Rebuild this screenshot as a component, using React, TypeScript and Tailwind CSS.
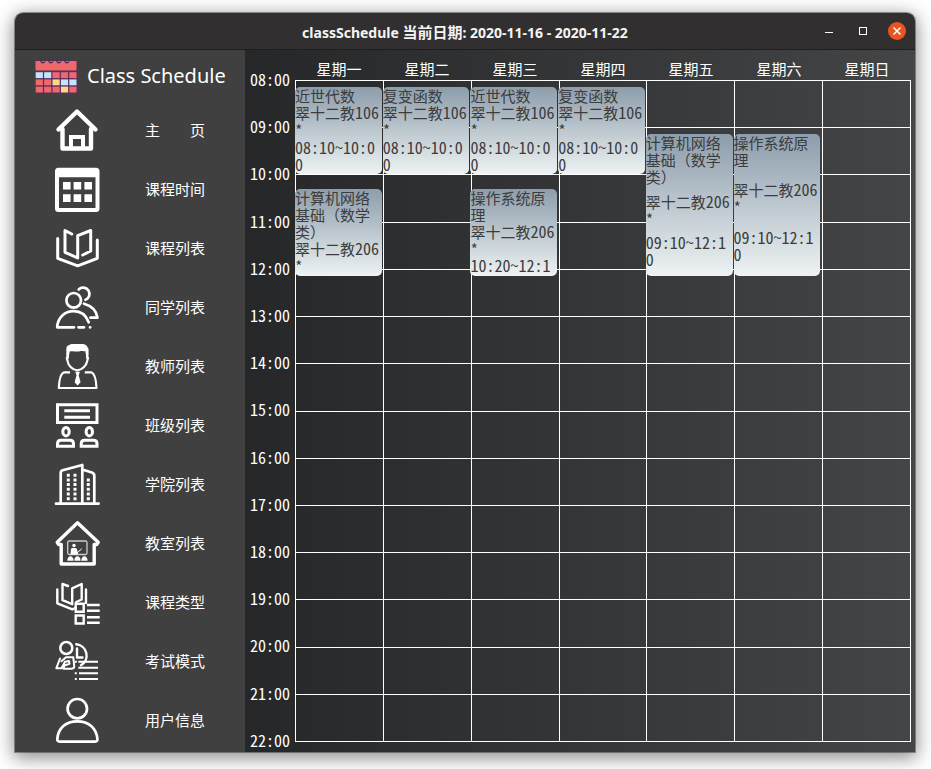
import type { ReactNode } from "react";

const FIRST_HOUR = 8;
const LAST_HOUR = 22;
const DAYS = ["星期一", "星期二", "星期三", "星期四", "星期五", "星期六", "星期日"];
const ROWS = LAST_HOUR - FIRST_HOUR;

type Course = { day: number; name: string; hall: string; room: string; from: string; to: string };

const COURSES: Course[] = [
  { day: 0, name: "近世代数", hall: "翠十二教", room: "106", from: "08:10", to: "10:00" },
  { day: 0, name: "计算机网络基础（数学类）", hall: "翠十二教", room: "206", from: "10:20", to: "12:10" },
  { day: 1, name: "复变函数", hall: "翠十二教", room: "106", from: "08:10", to: "10:00" },
  { day: 2, name: "近世代数", hall: "翠十二教", room: "106", from: "08:10", to: "10:00" },
  { day: 2, name: "操作系统原理", hall: "翠十二教", room: "206", from: "10:20", to: "12:10" },
  { day: 3, name: "复变函数", hall: "翠十二教", room: "106", from: "08:10", to: "10:00" },
  { day: 4, name: "计算机网络基础（数学类）", hall: "翠十二教", room: "206", from: "09:10", to: "12:10" },
  { day: 5, name: "操作系统原理", hall: "翠十二教", room: "206", from: "09:10", to: "12:10" },
];

function Icon({ children }: { children: ReactNode }) {
  return (
    <svg
      viewBox="0 0 44 44"
      className="size-11 shrink-0 overflow-visible"
      fill="none"
      stroke="#fff"
      strokeWidth="2.7"
      strokeLinecap="round"
      strokeLinejoin="round"
      aria-hidden="true"
    >
      {children}
    </svg>
  );
}

const MENU: { label: string; icon: ReactNode }[] = [
  {
    label: "主\u3000\u3000页",
    icon: (
      <Icon>
        <path strokeWidth="4.4" d="M7.500 20v19.500h28.500V20M3.500 20.500 22 2.500l18.500 18" />
        <path strokeWidth="4" strokeLinejoin="miter" d="M16 39V28h12v11" />
      </Icon>
    ),
  },
  {
    label: "课程时间",
    icon: (
      <Icon>
        <path
          fill="#fff"
          stroke="none"
          fillRule="evenodd"
          d="M3.500-.3h37.500a3.500 3.500 0 0 1 3.500 3.500V40.500a3.500 3.500 0 0 1-3.500 3.500H3.500A3.500 3.500 0 0 1 0 40.500V3.200A3.500 3.500 0 0 1 3.500-.3ZM4 9.300v30.700h36.500V9.300ZM8 14h7.600v7.600H8Zm10.600 0h7.600v7.600h-7.600Zm10.800 0h7.600v7.600h-7.600ZM8 26.300h7.600v7.600H8Zm10.600 0h7.600v7.600h-7.600Zm10.800 0h7.600v7.600h-7.600Z"
        />
      </Icon>
    ),
  },
  {
    label: "课程列表",
    icon: (
      <Icon>
        <path strokeWidth="3" d="M2.700 11.500v19.800l20 7.500 19.600-7.500V13M16.700 7 10 3.500v21.800l12.700 5.700V8.700l13-5.200V24l-8 4" />
      </Icon>
    ),
  },
  {
    label: "同学列表",
    icon: (
      <Icon>
        <circle cx="18.700" cy="14.300" r="7.300" />
        <path d="M23.700 3.500A6.300 6.300 0 1 1 30.500 13.800M29 17.700c7 2 12.500 6 13.500 14H35.500M33.700 36.300C31 29 26 25.200 18.700 25.200 9.500 25.200 2.500 32 2.200 41.300H19M23.500 41.300h5.500M35 41.300h.2" />
      </Icon>
    ),
  },
  {
    label: "教师列表",
    icon: (
      <Icon>
        <path
          fill="#fff"
          stroke="none"
          d="M11.500 13.500 11.300 4.500C11.300 1.500 12.500.500 14 .300 15-.8 16-1 18-1h9.500C30-1 32 .3 32.500 2.200 33.500 3 33.700 4 33.600 6l-.4 8.500-1.700-1L30.300 6c-2 .8-3.300-.3-5.300.3-3 1-6.500-.8-10.300.2l-1.200 7Z"
        />
        <path strokeWidth="2.200" d="M12.800 8v4.500l-1 .5.800 3c.5 4.500 5 9.300 9.700 9.300s9.200-4.800 9.900-9.300l.8-3-.9-.5V8" />
        <path strokeWidth="2.200" strokeLinecap="butt" d="M15 27.300H9c-3 1-4.800 7-5.200 15.700h37.700c-.4-8.700-2.200-14.700-5.200-15.700h-6.500" />
        <path fill="#fff" stroke="none" d="M20.300 26.700h4.600l-1.200 3.600 1.900 7-3 3.200-3-3.200 1.900-7Z" />
      </Icon>
    ),
  },
  {
    label: "班级列表",
    icon: (
      <Icon>
        <g strokeWidth="3" strokeLinejoin="miter" strokeLinecap="butt">
          <path d="M2.500.800h39.500v17.700H2.500Z" />
          <path d="M9.300 6.700H35M9.300 13.200H35" />
          <ellipse cx="11" cy="27.700" rx="3.200" ry="4.200" />
          <ellipse cx="34.300" cy="27.700" rx="3.200" ry="4.200" />
          <path d="M2.500 42.300v-2.500c0-2.500 1-3.500 3.500-3.500h9c2.500 0 3.500 1 3.500 3.500v2.500ZM26.200 42.300v-2.500c0-2.500 1-3.500 3.500-3.500h8.800c2.500 0 3.500 1 3.500 3.500v2.500Z" />
        </g>
      </Icon>
    ),
  },
  {
    label: "学院列表",
    icon: (
      <Icon>
        <path d="M1 40.700h42.600M5.700 40V10c0-1.500.8-2.300 2-2.700L27.300 2v38M27.300 6.500l9.500 3c1.700.600 2.500 1.500 2.500 3V40" />
        <path strokeWidth="3" strokeLinecap="butt" strokeDasharray="3 1.700" d="M13.300 10.700v27M20 10.700v27M33.300 15.400v22.300" />
      </Icon>
    ),
  },
  {
    label: "教室列表",
    icon: (
      <Icon>
        <path strokeWidth="3.400" d="M22.500.800 2.200 20.200l1.500 2.300h2.500V42h33V22.500h2.500l1.500-2.300Z" />
        <rect x="12.700" y="19" width="19.300" height="13.500" rx="1.500" strokeWidth="1.300" stroke="#ccc" />
        <path strokeWidth="1" d="m22 31 4.500-4" />
        <circle cx="19" cy="23.500" r="1.700" fill="#fff" stroke="none" />
        <path
          fill="#fff"
          stroke="none"
          d="M16 27c0-1.200 5.500-1.200 6 0l1 5.500h-7.500ZM12.300 38.700c0-6 6.300-6 6.300 0ZM19.300 38.700c0-6 6.300-6 6.300 0ZM26.300 38.700c0-6 6.300-6 6.300 0Z"
        />
      </Icon>
    ),
  },
  {
    label: "课程类型",
    icon: (
      <Icon>
        <path strokeWidth="2.400" d="M2.300 8.500v13.800l15 6 3-1.300M31 8.500V22M13 5 7.500 3v16.200l9.700 4V7.300L26.700 3v15.500l-5.500 2.500" />
        <path strokeWidth="2.400" strokeLinejoin="miter" strokeLinecap="butt" d="M20.700 22.700h8v8h-8ZM20.700 34.500h8v8h-8ZM32 24h12.700M32 29.700h12.700M32 36.300h12.700M32 41.800h12.700" />
      </Icon>
    ),
  },
  {
    label: "考试模式",
    icon: (
      <Icon>
        <circle cx="11.300" cy="8" r="6" strokeWidth="2.500" />
        <path strokeWidth="2.400" d="M21.300 4.300A11.300 11.300 0 0 1 26 25.300M22 8.500v9h5.500" />
        <path strokeWidth="2" d="M5 18.500 1.300 28.300h5.200l1-2M11 17.300h7.300l1 9.500c-.3 1.500-1.300 1.900-3 1.900H8.500l.8-3.200 5.200-1.700-.5-2.800-4 .8-2 3.700M11 17.300l-4.500 4" />
        <path strokeWidth="2" strokeLinecap="butt" d="M23.300 21.700h19.700M23.300 27.700h19.700M24 33.300h19M24 38.900h19M19.800 33.300h2M19.800 38.900h2M19.800 21.700h2" />
      </Icon>
    ),
  },
  {
    label: "用户信息",
    icon: (
      <Icon>
        <circle cx="22.300" cy="9.700" r="9.700" />
        <path d="M4.500 42.600h35.700c1.500 0 2.400-1 2.200-2.500C41.500 29 33.500 22.300 22.300 22.300S3 29 2.300 40.100c-.1 1.500.7 2.500 2.200 2.500Z" />
      </Icon>
    ),
  },
];

function Logo() {
  const red = "#ee696c";
  const blue = "#bfe6fb";
  const yellow = "#f9d98a";
  const cells = [
    [blue, blue, red, red, red],
    [red, red, yellow, blue, blue],
    [red, red, red, yellow, red],
  ];
  return (
    <svg viewBox="0 0 42 36" className="h-9 w-[42px] shrink-0" aria-hidden="true">
      <rect x="0" y="2.500" width="42" height="32.500" rx="1" fill="#5c2a5c" />
      <rect x=".5" y="3" width="41" height="9.500" rx=".5" fill={red} />
      {cells.map((row, r) =>
        row.map((fill, c) => (
          <rect key={`${r}-${c}`} x={0.7 + c * 8.4} y={14.2 + r * 7.2} width="7.200" height="5.900" fill={fill} />
        )),
      )}
      {[8.5, 16.5, 24.5, 32.5].map((x) => (
        <path key={x} d={`M${x - 1.5} 1a2 2 0 1 0 2.800 2.500`} fill="none" stroke="#4b2a5c" strokeWidth="1.300" />
      ))}
    </svg>
  );
}

function TitleBar() {
  return (
    <header className="grid h-[37px] shrink-0 grid-cols-[100px_1fr_100px] items-center rounded-t-lg border-b border-[#1f1e1f] bg-[#322f30] pt-[3px]">
      <h1 className="col-start-2 text-center font-['Noto_Sans','Noto_Sans_CJK_SC',sans-serif] text-sm font-bold whitespace-nowrap text-[#f4f4f2]">
        classSchedule <span className="text-[15px] leading-5">当前日期</span>: 2020-11-16 - 2020-11-22
      </h1>
      <div className="flex items-center justify-end gap-4 pr-[9px] pb-1">
        <button aria-label="最小化" className="flex size-[18px] items-center justify-center pt-1">
          <span className="h-px w-2 bg-white" />
        </button>
        <button aria-label="最大化" className="flex size-[18px] items-center justify-center">
          <span className="size-2 border border-white" />
        </button>
        <button aria-label="关闭" className="flex size-[18px] items-center justify-center rounded-full bg-[#e95420]">
          <svg viewBox="0 0 10 10" className="size-[10px]" stroke="#fff" strokeWidth="1.500" aria-hidden="true">
            <path d="m1.500 1.500 7 7m0-7-7 7" />
          </svg>
        </button>
      </div>
    </header>
  );
}

function Sidebar() {
  return (
    <aside className="flex w-[230px] shrink-0 flex-col bg-[#404040] pb-0.5 text-white">
      <div className="flex h-[51px] shrink-0 items-center gap-[10px] pl-5">
        <Logo />
        <span className="font-['Noto_Sans',sans-serif] text-xl whitespace-nowrap">Class Schedule</span>
      </div>
      <nav className="flex flex-1 flex-col">
        {MENU.map((item) => (
          <button key={item.label} className="flex flex-1 items-center gap-[46px] pl-10 text-[15px]">
            {item.icon}
            <span>{item.label}</span>
          </button>
        ))}
      </nav>
    </aside>
  );
}

function hoursSinceStart(time: string) {
  const [h, m] = time.split(":").map(Number);
  return h + m / 60 - FIRST_HOUR;
}

function CourseCard({ course }: { course: Course }) {
  const start = hoursSinceStart(course.from);
  const length = hoursSinceStart(course.to) - start;
  return (
    <article
      className="absolute flex flex-col overflow-hidden rounded-[5px] bg-linear-to-b from-[#8d9dab] to-[#eef3f3] text-[15px] leading-[17px] text-[#3c3c3c]"
      style={{
        left: `${(course.day / DAYS.length) * 100}%`,
        width: `calc(${100 / DAYS.length}% - 1px)`,
        top: `${(start / ROWS) * 100}%`,
        height: `${(length / ROWS) * 100}%`,
      }}
    >
      <p className="shrink-0 grow">{course.name}</p>
      <p className="shrink-0 grow">
        {course.hall}
        <span className="text-base leading-[17px]">{course.room}</span>
        <br />*
      </p>
      <p className="shrink-0 grow text-base leading-[17px] break-all">
        {course.from}~{course.to}
      </p>
    </article>
  );
}

function Timetable() {
  const hours = Array.from({ length: ROWS + 1 }, (_, i) => `${String(FIRST_HOUR + i).padStart(2, "0")}:00`);
  return (
    <main className="grid flex-1 grid-cols-[50px_1fr] grid-rows-[30px_1fr] bg-linear-to-r from-[#252729] to-[#444546] pr-1 pb-[10px] text-white">
      <div className="col-start-2 grid grid-cols-7 items-end pb-px text-center text-[15px] leading-5">
        {DAYS.map((day) => (
          <span key={day}>{day}</span>
        ))}
      </div>
      <div className="-mt-[9px] -mb-1.5 flex flex-col justify-between pl-[5px] text-base leading-4">
        {hours.map((hour) => (
          <time key={hour}>{hour}</time>
        ))}
      </div>
      <div className="relative flex flex-col border-t border-l border-white">
        {hours.slice(1).map((hour) => (
          <div key={hour} className="grid flex-1 grid-cols-7">
            {DAYS.map((day) => (
              <div key={day} className="border-r border-b border-white" />
            ))}
          </div>
        ))}
        <div className="absolute -top-0.5 right-0.5 bottom-px -left-px">
          {COURSES.map((course) => (
            <CourseCard key={`${course.day}-${course.from}`} course={course} />
          ))}
        </div>
      </div>
    </main>
  );
}

export default function App() {
  return (
    <div className="flex h-screen min-h-[640px] bg-white pt-[13px] pr-4 pb-[17px] pl-[15px] font-['Noto_Sans_Mono_CJK_SC','Noto_Sans_CJK_SC',sans-serif]">
      <div className="flex min-w-0 flex-1 flex-col rounded-t-lg shadow-[0_0_0_1px_rgba(0,0,0,0.35),0_4px_18px_2px_rgba(0,0,0,0.45)]">
        <TitleBar />
        <div className="flex min-h-0 flex-1">
          <Sidebar />
          <Timetable />
        </div>
      </div>
    </div>
  );
}
